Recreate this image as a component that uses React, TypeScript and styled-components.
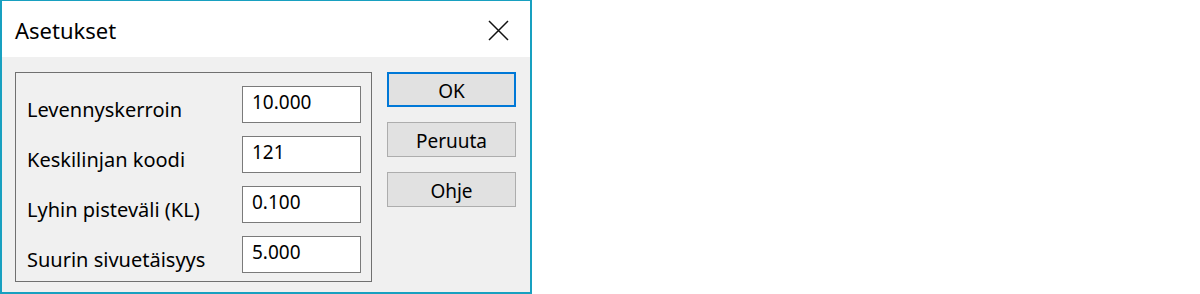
import React from "react";
import styled, { createGlobalStyle } from "styled-components";

const GlobalStyle = createGlobalStyle`
  html, body {
    margin: 0;
    padding: 0;
    background: #ffffff;
  }
  body {
    font-family: "Noto Sans", "Open Sans", sans-serif;
  }
`;

const Window = styled.div`
  width: 532px;
  height: 294px;
  box-sizing: border-box;
  border: 2px solid #18a0c0;
  border-top-width: 1px;
  display: flex;
  flex-direction: column;
  background: #f0f0f0;
`;

const TitleBar = styled.div`
  height: 56px;
  background: #ffffff;
  display: flex;
  align-items: center;
  justify-content: space-between;
  padding: 0 21px 0 13px;
`;

const Title = styled.span`
  font-size: 22px;
  color: #000;
  margin-top: 2px;
`;

const CloseButton = styled.button`
  width: 22px;
  height: 22px;
  padding: 0;
  border: none;
  background: transparent;
  display: flex;
  align-items: center;
  justify-content: center;
  margin-top: 2px;
`;

const Body = styled.div`
  flex: 1;
  display: flex;
  gap: 15px;
  padding: 15px 0 0 13px;
`;

const GroupBox = styled.div`
  width: 357px;
  height: 210px;
  box-sizing: border-box;
  border: 1px solid #707070;
  padding: 13px 10px 0 11px;
  display: flex;
  flex-direction: column;
  gap: 13px;
`;

const Row = styled.div`
  display: flex;
  align-items: center;
  justify-content: space-between;
  height: 37px;
`;

const Label = styled.span`
  font-size: 20px;
  color: #000;
  padding-top: 9px;
`;

const Input = styled.div`
  width: 119px;
  height: 37px;
  box-sizing: border-box;
  border: 1px solid #7a7a7a;
  background: #fff;
  font-size: 19px;
  color: #000;
  padding: 2px 0 0 9px;
  line-height: 26px;
`;

const Buttons = styled.div`
  display: flex;
  flex-direction: column;
  gap: 15px;
`;

const Button = styled.button<{ $default?: boolean }>`
  width: 129px;
  height: 35px;
  box-sizing: border-box;
  background: #e1e1e1;
  border: ${(p) => (p.$default ? "2px solid #0078d7" : "1px solid #adadad")};
  font-family: "Noto Sans", "Open Sans", sans-serif;
  font-size: 19px;
  color: #000;
  padding: 3px 0 0;
  line-height: 1;
`;

const fields = [
  { label: "Levennyskerroin", value: "10.000" },
  { label: "Keskilinjan koodi", value: "121" },
  { label: "Lyhin pisteväli (KL)", value: "0.100" },
  { label: "Suurin sivuetäisyys", value: "5.000" },
];

const App: React.FC = () => {
  return (
    <>
      <GlobalStyle />
      <Window>
        <TitleBar>
          <Title>Asetukset</Title>
          <CloseButton aria-label="Sulje">
            <svg width="21" height="21" viewBox="0 0 21 21">
              <path d="M1 1 L20 20 M20 1 L1 20" stroke="#111" strokeWidth="1.5" fill="none" />
            </svg>
          </CloseButton>
        </TitleBar>
        <Body>
          <GroupBox>
            {fields.map((f) => (
              <Row key={f.label}>
                <Label>{f.label}</Label>
                <Input>{f.value}</Input>
              </Row>
            ))}
          </GroupBox>
          <Buttons>
            <Button $default>OK</Button>
            <Button>Peruuta</Button>
            <Button>Ohje</Button>
          </Buttons>
        </Body>
      </Window>
    </>
  );
};

export default App;
